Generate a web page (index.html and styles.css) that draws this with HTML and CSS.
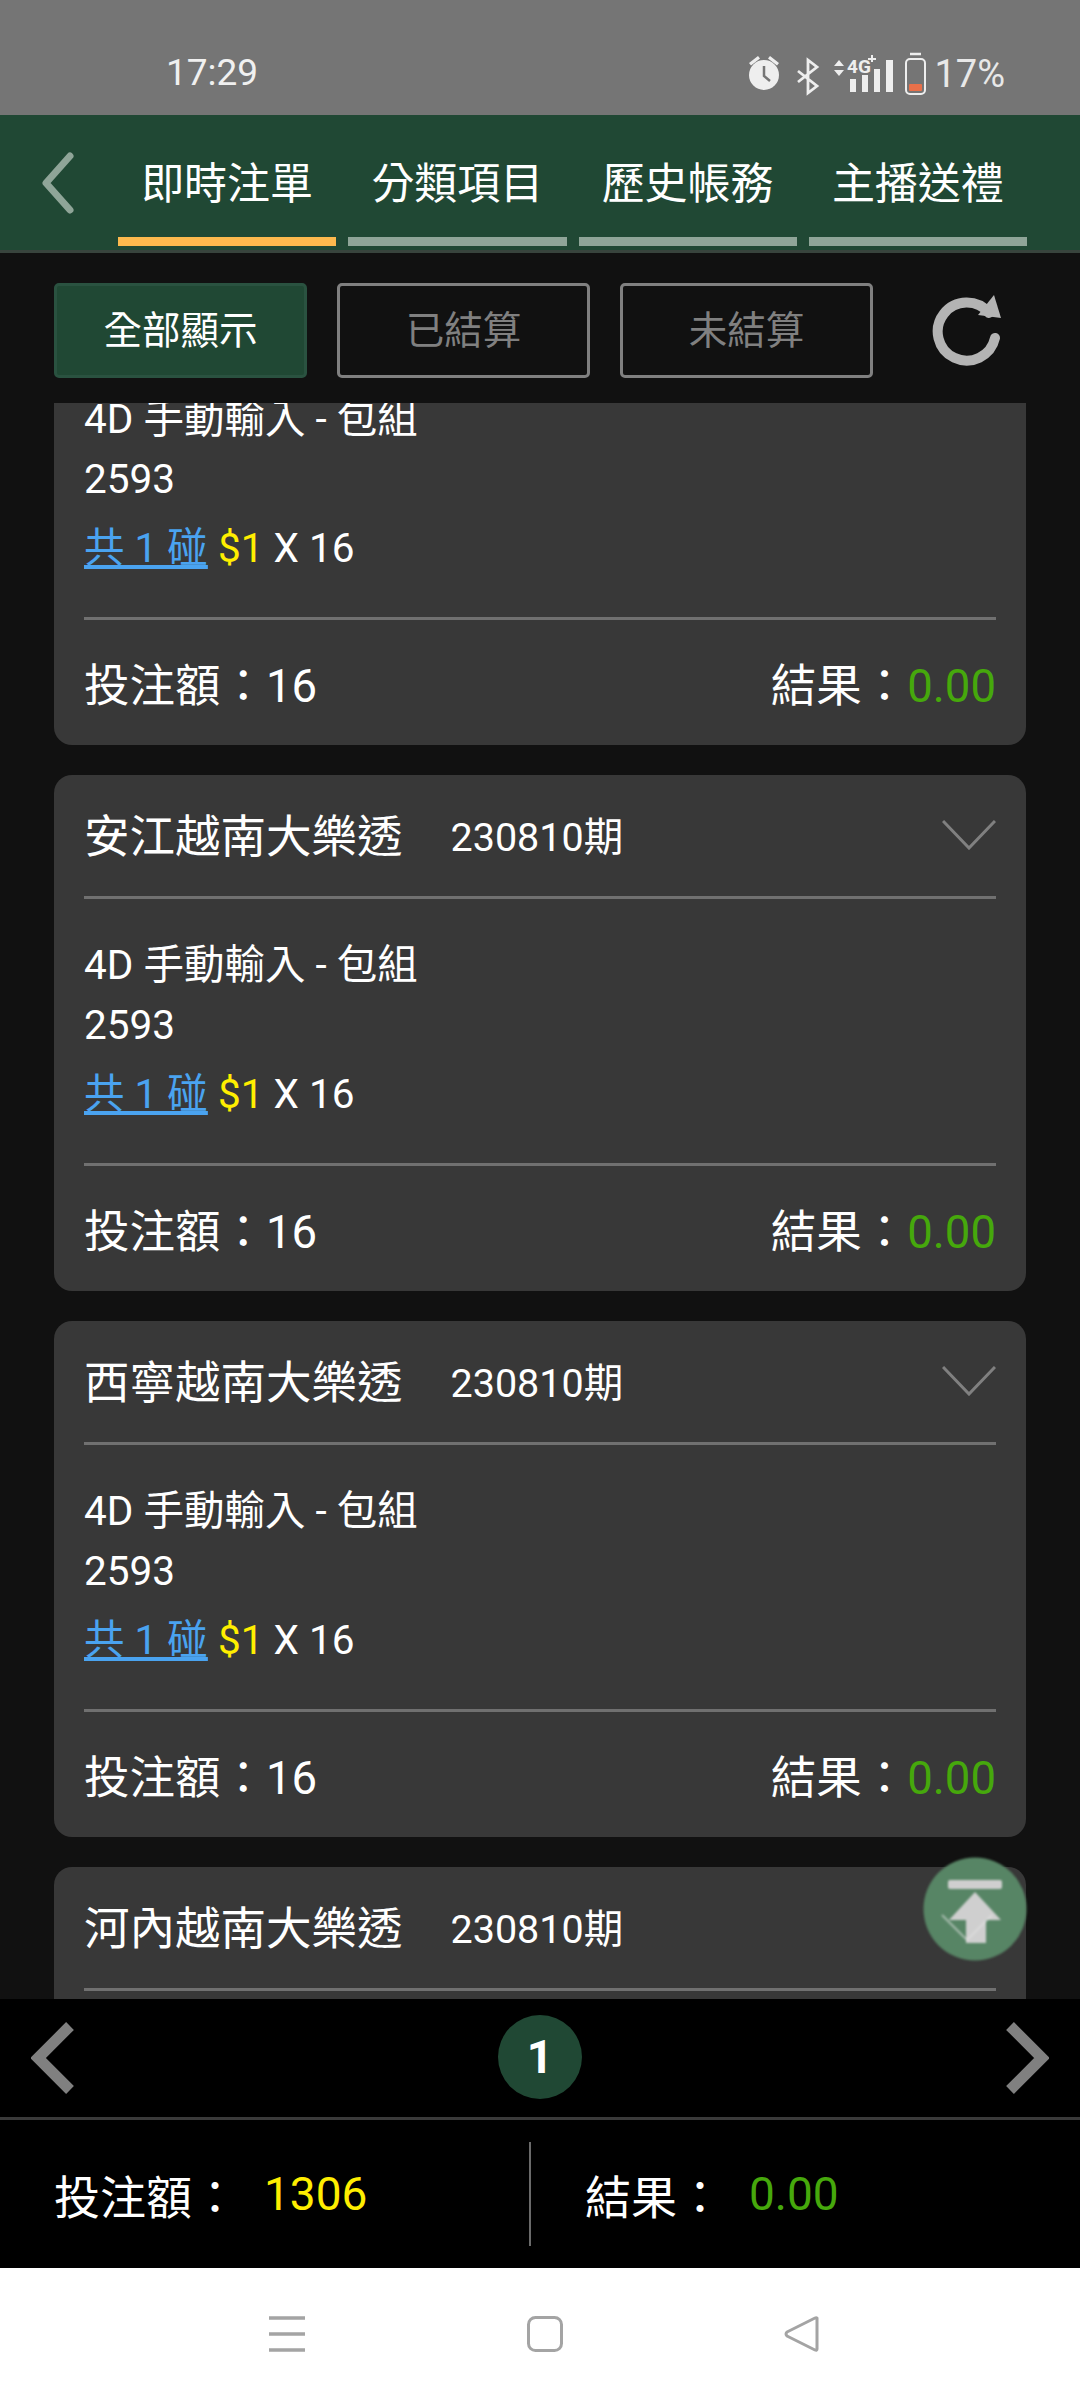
FILE: index.html
```html
<!DOCTYPE html>
<html lang="zh-Hant">
<head>
<meta charset="utf-8">
<title>即時注單</title>
<link rel="stylesheet" href="styles.css">
</head>
<body>
<div class="app">
  <div class="status">
    <span class="time">17:29</span>
    <svg class="status-icons" viewBox="0 0 190 50" width="190" height="50">
      <g fill="#eeeeee" stroke="none">
        <circle cx="26" cy="26" r="15"/>
        <path d="M11 14l9-7 2 2.500-9 7zM41 14l-9-7-2 2.500 9 7z"/>
      </g>
      <path d="M26 17v10l6 5" fill="none" stroke="#757575" stroke-width="2.500"/>
      <path d="M60 33l19-15-9-7v33l9-7-19-15" fill="none" stroke="#eeeeee" stroke-width="2.800"/>
      <path d="M96 17h10l-5-6zM96 21h10l-5 6z" fill="#eeeeee"/>
      <text class="net" x="109" y="24">4G</text>
      <path d="M130 10h8M134 6v7" stroke="#eeeeee" stroke-width="2" fill="none"/>
      <path d="M112 30h6v13h-6zM124 26h6v17h-6zM136 20h6v23h-6zM148 11h7v32h-7z" fill="#eeeeee"/>
      <rect x="168" y="10" width="19" height="35" rx="4" fill="none" stroke="#eeeeee" stroke-width="2"/>
      <path d="M172 5h11" stroke="#eeeeee" stroke-width="2.500"/>
      <rect x="171" y="35" width="13" height="7" rx="1" fill="#e8704a"/>
    </svg>
    <span class="pct">17%</span>
  </div>

  <header class="topbar">
    <svg class="back" viewBox="0 0 40 66" width="40" height="66"><path d="M32 6L8 33l24 27" fill="none" stroke="#8fa598" stroke-width="7" stroke-linecap="round" stroke-linejoin="round"/></svg>
    <nav class="tabs">
      <div class="tab tab-on">即時注單</div>
      <div class="tab">分類項目</div>
      <div class="tab">歷史帳務</div>
      <div class="tab">主播送禮</div>
    </nav>
  </header>

  <div class="filters">
    <div class="fbtn fbtn-on">全部顯示</div>
    <div class="fbtn">已結算</div>
    <div class="fbtn">未結算</div>
    <svg class="refresh" viewBox="0 0 80 80" width="80" height="80">
      <path d="M65 50A29 29 0 1 1 59 25" fill="none" stroke="#b4b4b4" stroke-width="10" stroke-linecap="round"/>
      <path d="M64 7l7 23-23-3z" fill="#b4b4b4"/>
    </svg>
  </div>

  <main class="list">
    <section class="card card-first">
      <div class="card-head"><span class="lottery">安江越南大樂透</span><span class="period">230810期</span><svg class="chev" viewBox="0 0 54 30" width="54" height="30"><path d="M1 1l26 27L53 1" fill="none" stroke="#808080" stroke-width="3"/></svg></div>
      <div class="card-body">
        <div class="line">4D 手動輸入 - 包組</div>
        <div class="line">2593</div>
        <div class="line line-odds"><a class="hit">共 1 碰</a> <span class="yellow">$1</span> X 16</div>
      </div>
      <div class="card-foot"><span>投注額：16</span><span>結果：<span class="green">0.00</span></span></div>
    </section>
    <section class="card">
      <div class="card-head"><span class="lottery">安江越南大樂透</span><span class="period">230810期</span><svg class="chev" viewBox="0 0 54 30" width="54" height="30"><path d="M1 1l26 27L53 1" fill="none" stroke="#808080" stroke-width="3"/></svg></div>
      <div class="card-body">
        <div class="line">4D 手動輸入 - 包組</div>
        <div class="line">2593</div>
        <div class="line line-odds"><a class="hit">共 1 碰</a> <span class="yellow">$1</span> X 16</div>
      </div>
      <div class="card-foot"><span>投注額：16</span><span>結果：<span class="green">0.00</span></span></div>
    </section>
    <section class="card">
      <div class="card-head"><span class="lottery">西寧越南大樂透</span><span class="period">230810期</span><svg class="chev" viewBox="0 0 54 30" width="54" height="30"><path d="M1 1l26 27L53 1" fill="none" stroke="#808080" stroke-width="3"/></svg></div>
      <div class="card-body">
        <div class="line">4D 手動輸入 - 包組</div>
        <div class="line">2593</div>
        <div class="line line-odds"><a class="hit">共 1 碰</a> <span class="yellow">$1</span> X 16</div>
      </div>
      <div class="card-foot"><span>投注額：16</span><span>結果：<span class="green">0.00</span></span></div>
    </section>
    <section class="card">
      <div class="card-head"><span class="lottery">河內越南大樂透</span><span class="period">230810期</span><svg class="chev" viewBox="0 0 54 30" width="54" height="30"><path d="M1 1l26 27L53 1" fill="none" stroke="#808080" stroke-width="3"/></svg></div>
    </section>
    <svg class="fab" viewBox="0 0 104 104" width="104" height="104">
      <circle cx="52" cy="52" r="51.500" fill="#578565"/>
      <rect x="25" y="23" width="54" height="9" rx="2" fill="#cfcfcf"/>
      <path d="M52 35l26 28H63v23H43V63H26z" fill="#cfcfcf"/>
      <path d="M19 58l25 25 25-25" fill="none" stroke="#e4e4e4" stroke-opacity=".55" stroke-width="2"/>
    </svg>
  </main>

  <div class="pager">
    <svg viewBox="0 0 44 72" width="44" height="72"><path d="M39 4L7 36l32 32" fill="none" stroke="#808080" stroke-width="11"/></svg>
    <div class="page-dot">1</div>
    <svg viewBox="0 0 44 72" width="44" height="72"><path d="M5 4l32 32L5 68" fill="none" stroke="#808080" stroke-width="11"/></svg>
  </div>

  <div class="totals">
    <div class="total total-left"><span>投注額：</span><span class="yellow total-val">1306</span></div>
    <div class="total total-right"><span>結果：</span><span class="green total-val">0.00</span></div>
  </div>

  <div class="sysnav">
    <svg viewBox="0 0 36 36" width="36" height="36"><path d="M0 2h36M0 18h36M0 34h36" stroke="#a4a4a4" stroke-width="3.500" fill="none"/></svg>
    <svg viewBox="0 0 36 36" width="36" height="36"><rect x="1.500" y="1.500" width="33" height="33" rx="7" fill="none" stroke="#a4a4a4" stroke-width="3"/></svg>
    <svg viewBox="0 0 36 36" width="36" height="36"><path d="M33 2v31q0 2-2 1L3 20q-2-2 0-4L31 2q2-1 2 1z" fill="none" stroke="#a4a4a4" stroke-width="3" stroke-linejoin="round"/></svg>
  </div>
</div>
</body>
</html>
```

FILE: styles.css
```css
* { box-sizing: border-box; }
html, body { margin: 0; padding: 0; }
body {
  width: 1080px;
  height: 2400px;
  overflow: hidden;
  background: #111111;
  color: #ffffff;
  font-family: Roboto, "Noto Sans CJK TC", sans-serif;
}
.app { display: flex; flex-direction: column; height: 2400px; }

.status {
  flex: 0 0 115px;
  background: #757575;
  color: #f0f0f0;
  display: flex;
  align-items: center;
  padding: 30px 0 0 166px;
  font-size: 37px;
}
.time { margin-right: auto; }
.status-icons { margin: 3px 6px 0 0; }
.pct { margin-right: 75px; font-size: 38px; color: #e8e8e8; padding-top: 2px; }
.net { font-size: 19px; font-weight: 700; fill: #eeeeee; font-family: Roboto, sans-serif; }

.topbar {
  flex: 0 0 138px;
  background: #204834;
  border-bottom: 3px solid #38443d;
  display: flex;
}
.back { margin: 35px 0 0 38px; }
.tabs {
  display: flex;
  gap: 12px;
  margin-left: 40px;
}
.tab {
  width: 218.250px;
  height: 131px;
  border-bottom: 9px solid #8fa598;
  padding-top: 38px;
  text-align: center;
  font-size: 43px;
  line-height: 62px;
}
.tab-on { border-bottom-color: #fdb94e; }

.filters {
  flex: 0 0 150px;
  display: flex;
  align-items: flex-start;
  padding: 30px 0 0 54px;
  gap: 30px;
}
.fbtn {
  width: 253px;
  height: 95px;
  border: 3px solid #808080;
  border-radius: 5px;
  color: #808080;
  font-size: 38.500px;
  line-height: 89px;
  text-align: center;
}
.fbtn-on { background: #204834; border-color: #2a5240; color: #ffffff; }
.refresh { margin: 5px 0 0 27px; }

.list {
  flex: 0 0 1596px;
  overflow: hidden;
  position: relative;
  padding: 0 54px;
}
.card {
  background: #383838;
  border-radius: 18px;
  height: 516px;
  margin-bottom: 30px;
  padding: 0 30px;
  overflow: hidden;
}
.card-first { margin-top: -174px; }
.card-head {
  height: 124px;
  border-bottom: 3px solid #707070;
  display: flex;
  align-items: center;
  padding-bottom: 5px;
  position: relative;
}
.lottery { font-size: 45.500px; }
.period { font-size: 39.500px; margin-left: 48px; }
.chev { position: absolute; right: 0; top: 45px; }
.card-body { height: 267px; padding-top: 36px; border-bottom: 3px solid #707070; }
.line { height: 60px; line-height: 60px; font-size: 40.500px; }
.line-odds { margin-top: 9px; }
.hit { color: #4aa3f0; text-decoration: underline; text-decoration-thickness: 4px; text-underline-offset: 3px; }
.yellow { color: #ffee00; }
.green { color: #46a80c; }
.card-foot {
  display: flex;
  justify-content: space-between;
  align-items: center;
  height: 125px;
  padding-bottom: 2px;
  font-size: 45.500px;
}

.fab { position: absolute; right: 53px; top: 1454px; filter: blur(0.8px); }

.pager {
  flex: 0 0 118px;
  background: #000000;
  display: flex;
  align-items: center;
  justify-content: space-between;
  padding: 0 31px;
}
.page-dot {
  width: 84px;
  height: 84px;
  margin-bottom: 3px;
  border-radius: 50%;
  background: #204834;
  text-align: center;
  font-size: 46px;
  font-weight: 700;
  line-height: 84px;
}

.totals {
  flex: 0 0 151px;
  background: #000000;
  border-top: 3px solid #3a3a3a;
  display: flex;
  align-items: center;
  font-size: 46px;
}
.total { display: flex; align-items: center; height: 104px; }
.total-left { width: 531px; padding-left: 54px; border-right: 2px solid #6a6a6a; }
.total-right { padding-left: 54px; }
.total-val { margin-left: 26px; }

.sysnav {
  flex: 0 0 132px;
  background: #ffffff;
  display: flex;
  align-items: center;
  padding: 0 0 0 269px;
  gap: 221.500px;
}
```
